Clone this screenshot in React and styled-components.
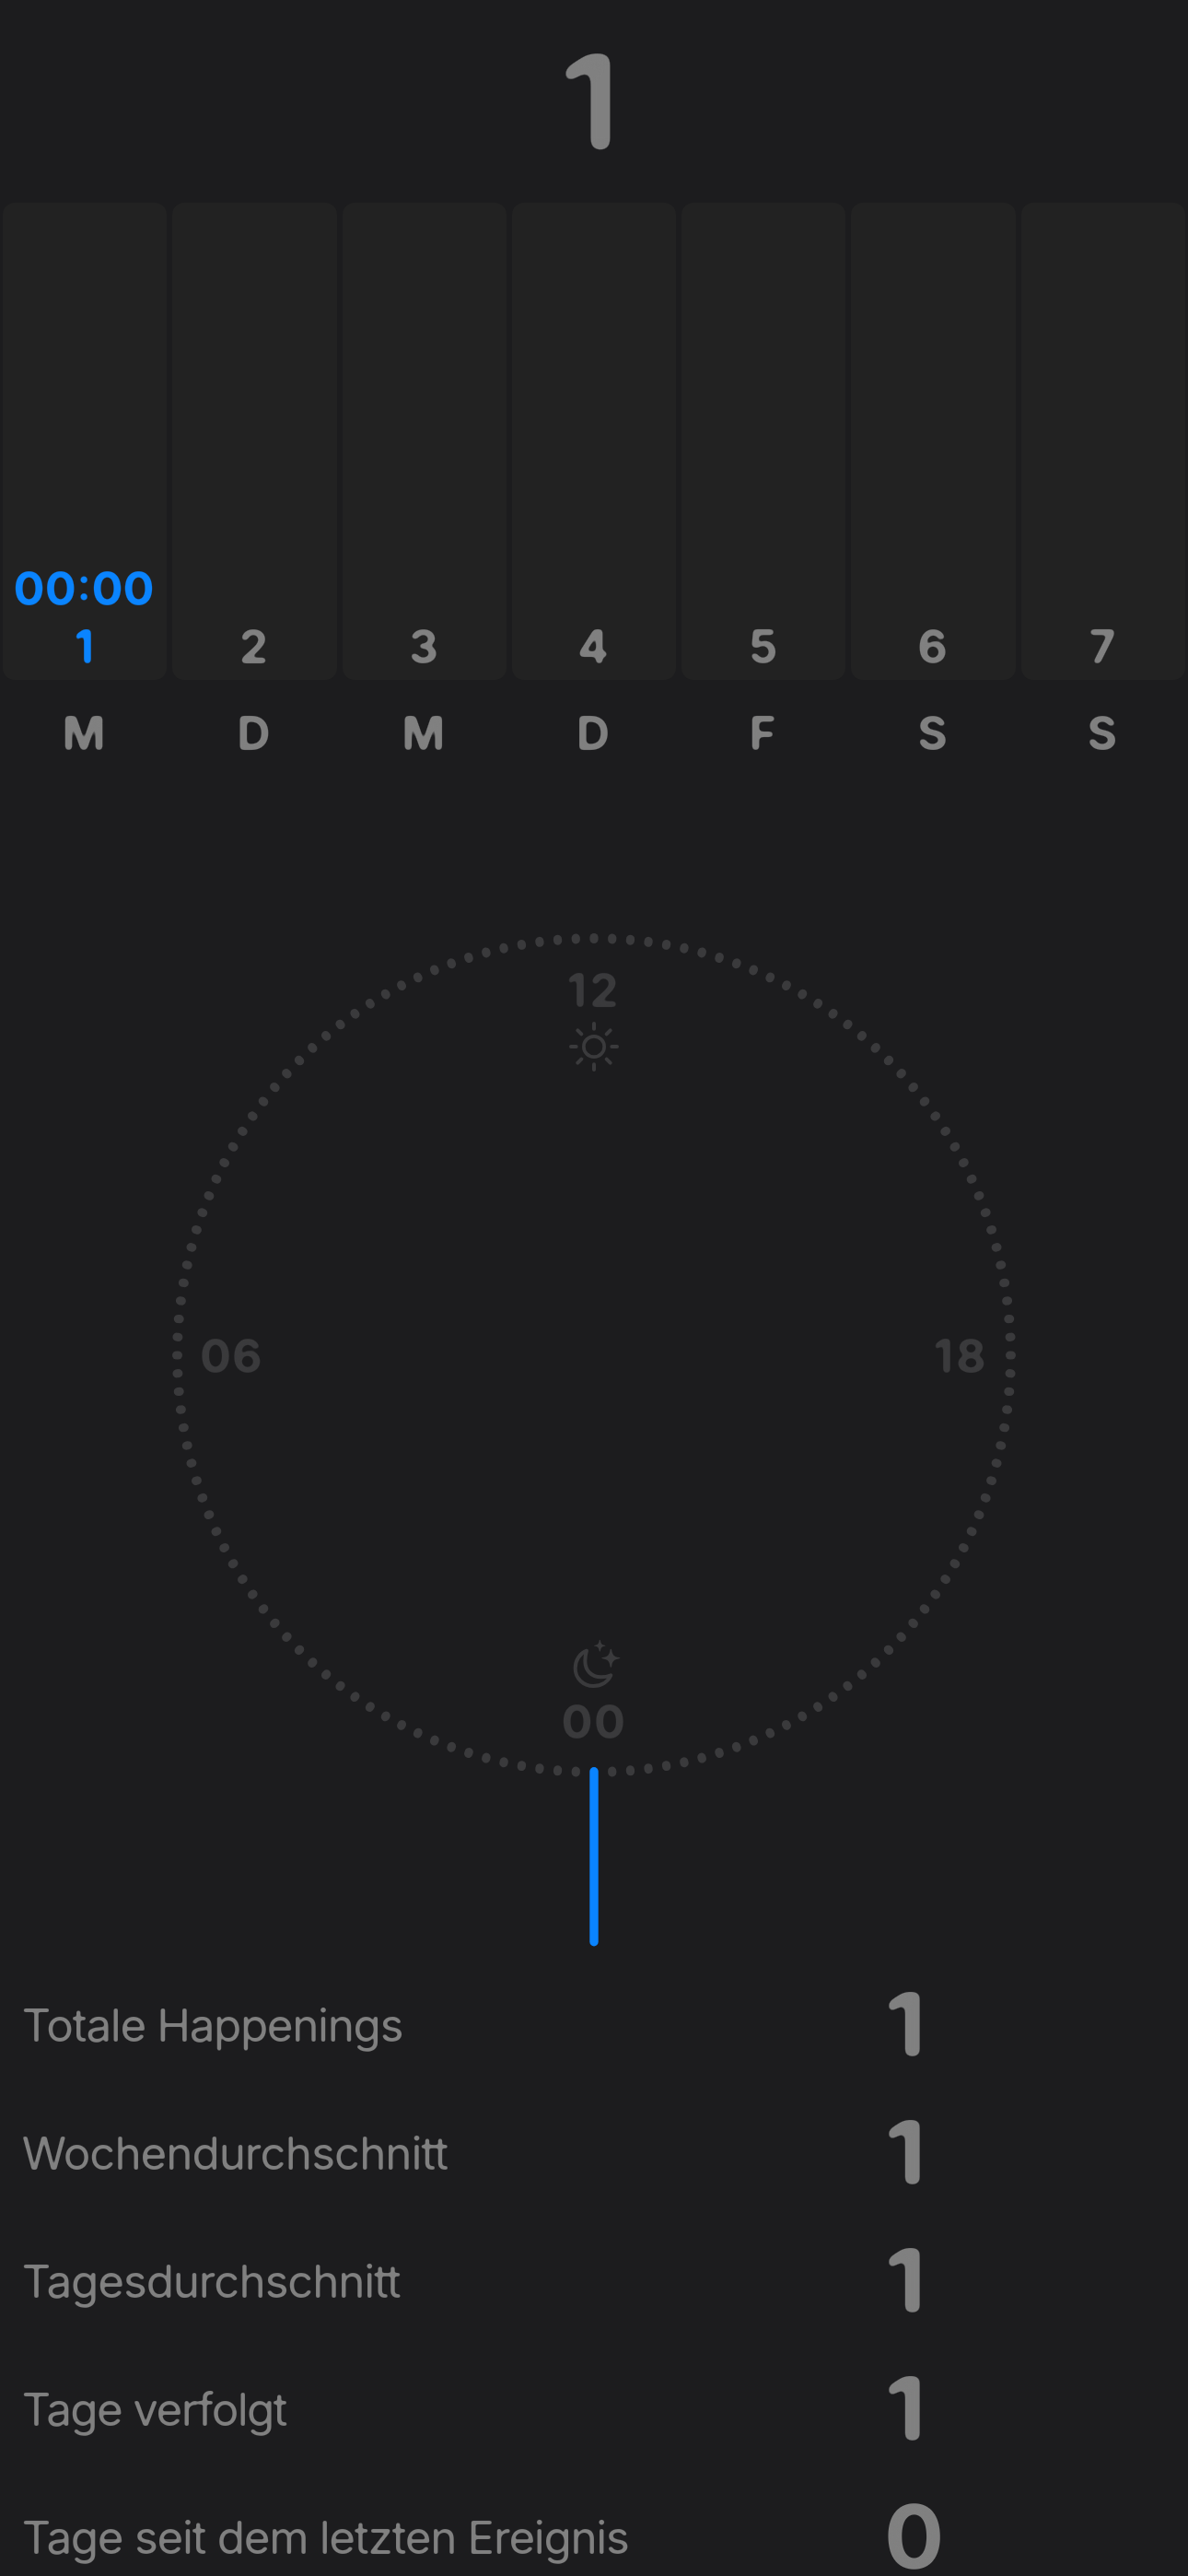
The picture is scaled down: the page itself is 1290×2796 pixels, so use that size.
import React from "react";
import styled, { createGlobalStyle } from "styled-components";

const BLUE = "#0a84ff";
const GRAY = "#808080";
const DIM = "#3a3a3c";

const GlobalStyle = createGlobalStyle`
  html, body { margin: 0; background: #1c1c1e; }
  * { box-sizing: border-box; }
`;

const Screen = styled.main`
  width: 1290px;
  height: 2796px;
  overflow: hidden;
  display: flex;
  flex-direction: column;
  background: #1c1c1e;
  color: ${GRAY};
  font-family: Inter, "Liberation Sans", sans-serif;
`;

const Defs = styled.svg`
  position: absolute;
  width: 0;
  height: 0;
`;

const Total = styled.h1`
  flex: none;
  margin: 0;
  height: 220px;
  padding-right: 9px;
  line-height: 221px;
  text-align: center;
  font-size: 144.5px;
  font-weight: 640;
  transform: scaleX(1.12);
  filter: url(#round-large);
`;

const Week = styled.section`
  flex: none;
  display: grid;
  grid-template-columns: repeat(7, 1fr);
`;

const Day = styled.div`
  display: flex;
  flex-direction: column;
  padding: 0 3px;
`;

const Bar = styled.div`
  height: 518px;
  padding-bottom: 5px;
  border-radius: 13px;
  background: #222222;
  display: flex;
  flex-direction: column;
  justify-content: flex-end;
`;

const Label = styled.span`
  display: block;
  padding-right: 2px;
  text-align: center;
  font-size: 50.5px;
  line-height: 63px;
  font-weight: 680;
  letter-spacing: ${(p) => p.$spacing || 0}px;
  color: ${(p) => p.$color || GRAY};
  filter: url(#round-small);
`;

const Weekday = styled(Label)`
  margin-top: 27px;
  line-height: 62px;
`;

const Dial = styled.section`
  flex: none;
  position: relative;
  height: 1301px;
  padding: 217px 217px 228px;
  display: flex;
  flex-direction: column;
  justify-content: space-between;
`;

const Ring = styled.svg`
  position: absolute;
  inset: 0;
`;

const Pole = styled.div`
  display: flex;
  flex-direction: column;
  align-items: center;
  gap: ${(p) => p.$gap || 0}px;
`;

const Sides = styled.div`
  display: flex;
  justify-content: space-between;
  margin-top: 2px;
  margin-right: -1px;
`;

const Hour = styled(Label)`
  line-height: 62px;
  padding-right: 0;
  color: ${DIM};
`;

const Icon = styled.svg`
  width: 60px;
  height: 60px;
  display: block;
`;

const Stats = styled.dl`
  flex: none;
  margin: 0;
`;

const Row = styled.div`
  height: 139px;
  padding-left: 23.5px;
  display: grid;
  grid-template-columns: 936.5px 1fr;
  align-items: center;
`;

const Name = styled.dt`
  font-size: 49.5px;
  font-weight: 420;
  letter-spacing: ${(p) => p.$spacing || 0}px;
  filter: url(#round-text);
`;

const Value = styled.dd`
  justify-self: start;
  margin: 0 0 2px;
  font-size: 96px;
  line-height: 76px;
  font-weight: ${(p) => (p.$narrow ? 650 : 700)};
  transform: scaleX(${(p) => (p.$narrow ? 1.1 : 1.01)});
  transform-origin: left;
  filter: url(#round-medium);
`;

const days = ["M", "D", "M", "D", "F", "S", "S"];

const stats = [
  { name: "Totale Happenings", value: "1", spacing: -1.42 },
  { name: "Wochendurchschnitt", value: "1", spacing: -1.1 },
  { name: "Tagesdurchschnitt", value: "1", spacing: -1.25 },
  { name: "Tage verfolgt", value: "1", spacing: -1.68 },
  { name: "Tage seit dem letzten Ereignis", value: "0", spacing: -1.4 },
];

// Softens the corners of glyphs: blur the alpha channel, then sharpen it again.
function Rounding({ id, radius, slope }) {
  return (
    <filter id={id} x="-10%" y="-15%" width="120%" height="130%" colorInterpolationFilters="sRGB">
      <feGaussianBlur stdDeviation={radius} />
      <feComponentTransfer>
        <feFuncA type="linear" slope={slope} intercept={0.5 - slope / 2} />
      </feComponentTransfer>
    </filter>
  );
}

function Dots() {
  const steps = Array.from({ length: 144 }, (_, i) => i).filter((i) => i !== 72);
  return (
    <g stroke={DIM} strokeWidth="9.2" strokeLinecap="round">
      {steps.map((i) => (
        <line key={i} x1="645" x2="645" y1="190.6" y2="192.4" transform={`rotate(${i * 2.5} 645 644)`} />
      ))}
    </g>
  );
}

function Sun() {
  return (
    <Icon viewBox="105 318 180 180" fill="none" stroke={DIM}>
      <circle cx="195" cy="408" r="33.5" strokeWidth="11" />
      {[0, 45, 90, 135, 180, 225, 270, 315].map((a) => (
        <path key={a} d="M195 350V333" strokeWidth="12" strokeLinecap="round" transform={`rotate(${a} 195 408)`} />
      ))}
    </Icon>
  );
}

function Moon() {
  return (
    <Icon viewBox="105 48 180 180" fill={DIM}>
      <path
        d="M171 95C148 104 134 126 134 152C134 185 160 210 193 210C220 210 241 196 250 175C240 179 229 181 218 181C187 181 166 160 166 128C166 116 168 105 171 95Z"
        fill="none"
        stroke={DIM}
        strokeWidth="12"
        strokeLinejoin="round"
      />
      <path d="M250 89Q252 89 252.5 92C255 109 260 114 277 117Q280 118 280 119Q280 120 277 121C260 124 255 129 252.5 146Q252 149 250 149Q248 149 247.5 146C245 129 240 124 223 121Q220 120 220 119Q220 118 223 117C240 114 245 109 247.5 92Q248 89 250 89Z" />
      <path d="M214 59.5Q215.5 60 216 62C217.5 72 220 75 230 77Q232.5 78 232.5 78.5Q232.5 79.5 230 80C220 82 217.5 85 216 95Q215.5 97.5 214 97.5Q212.5 97.5 212 95C210.5 85 208 82 198 80Q195 79.5 195 78.5Q195 78 198 77C208 75 210.5 72 212 62Q212.5 60 214 59.5Z" />
    </Icon>
  );
}

export default function App() {
  return (
    <Screen>
      <GlobalStyle />
      <Defs aria-hidden="true">
        <Rounding id="round-large" radius={5.6} slope={13} />
        <Rounding id="round-medium" radius={3.8} slope={9} />
        <Rounding id="round-small" radius={2.1} slope={5} />
        <Rounding id="round-text" radius={1.1} slope={2.8} />
      </Defs>
      <Total>1</Total>
      <Week>
        {days.map((day, i) => (
          <Day key={i}>
            <Bar>
              {i === 0 && <Label $color={BLUE}>00:00</Label>}
              <Label $color={i === 0 ? BLUE : GRAY}>{i + 1}</Label>
            </Bar>
            <Weekday>{day}</Weekday>
          </Day>
        ))}
      </Week>
      <Dial>
        <Ring width="1290" height="1301" viewBox="0 0 1290 1301">
          <Dots />
          <line x1="645" x2="645" y1="1095.7" y2="1280.8" stroke={BLUE} strokeWidth="9.4" strokeLinecap="round" />
        </Ring>
        <Pole>
          <Hour $spacing={3}>12</Hour>
          <Sun />
        </Pole>
        <Sides>
          <Hour $spacing={1}>06</Hour>
          <Hour $spacing={3}>18</Hour>
        </Sides>
        <Pole $gap={2}>
          <Moon />
          <Hour $spacing={1.5}>00</Hour>
        </Pole>
      </Dial>
      <Stats>
        {stats.map(({ name, value, spacing }) => (
          <Row key={name}>
            <Name $spacing={spacing}>{name}</Name>
            <Value $narrow={value === "1"}>{value}</Value>
          </Row>
        ))}
      </Stats>
    </Screen>
  );
}
